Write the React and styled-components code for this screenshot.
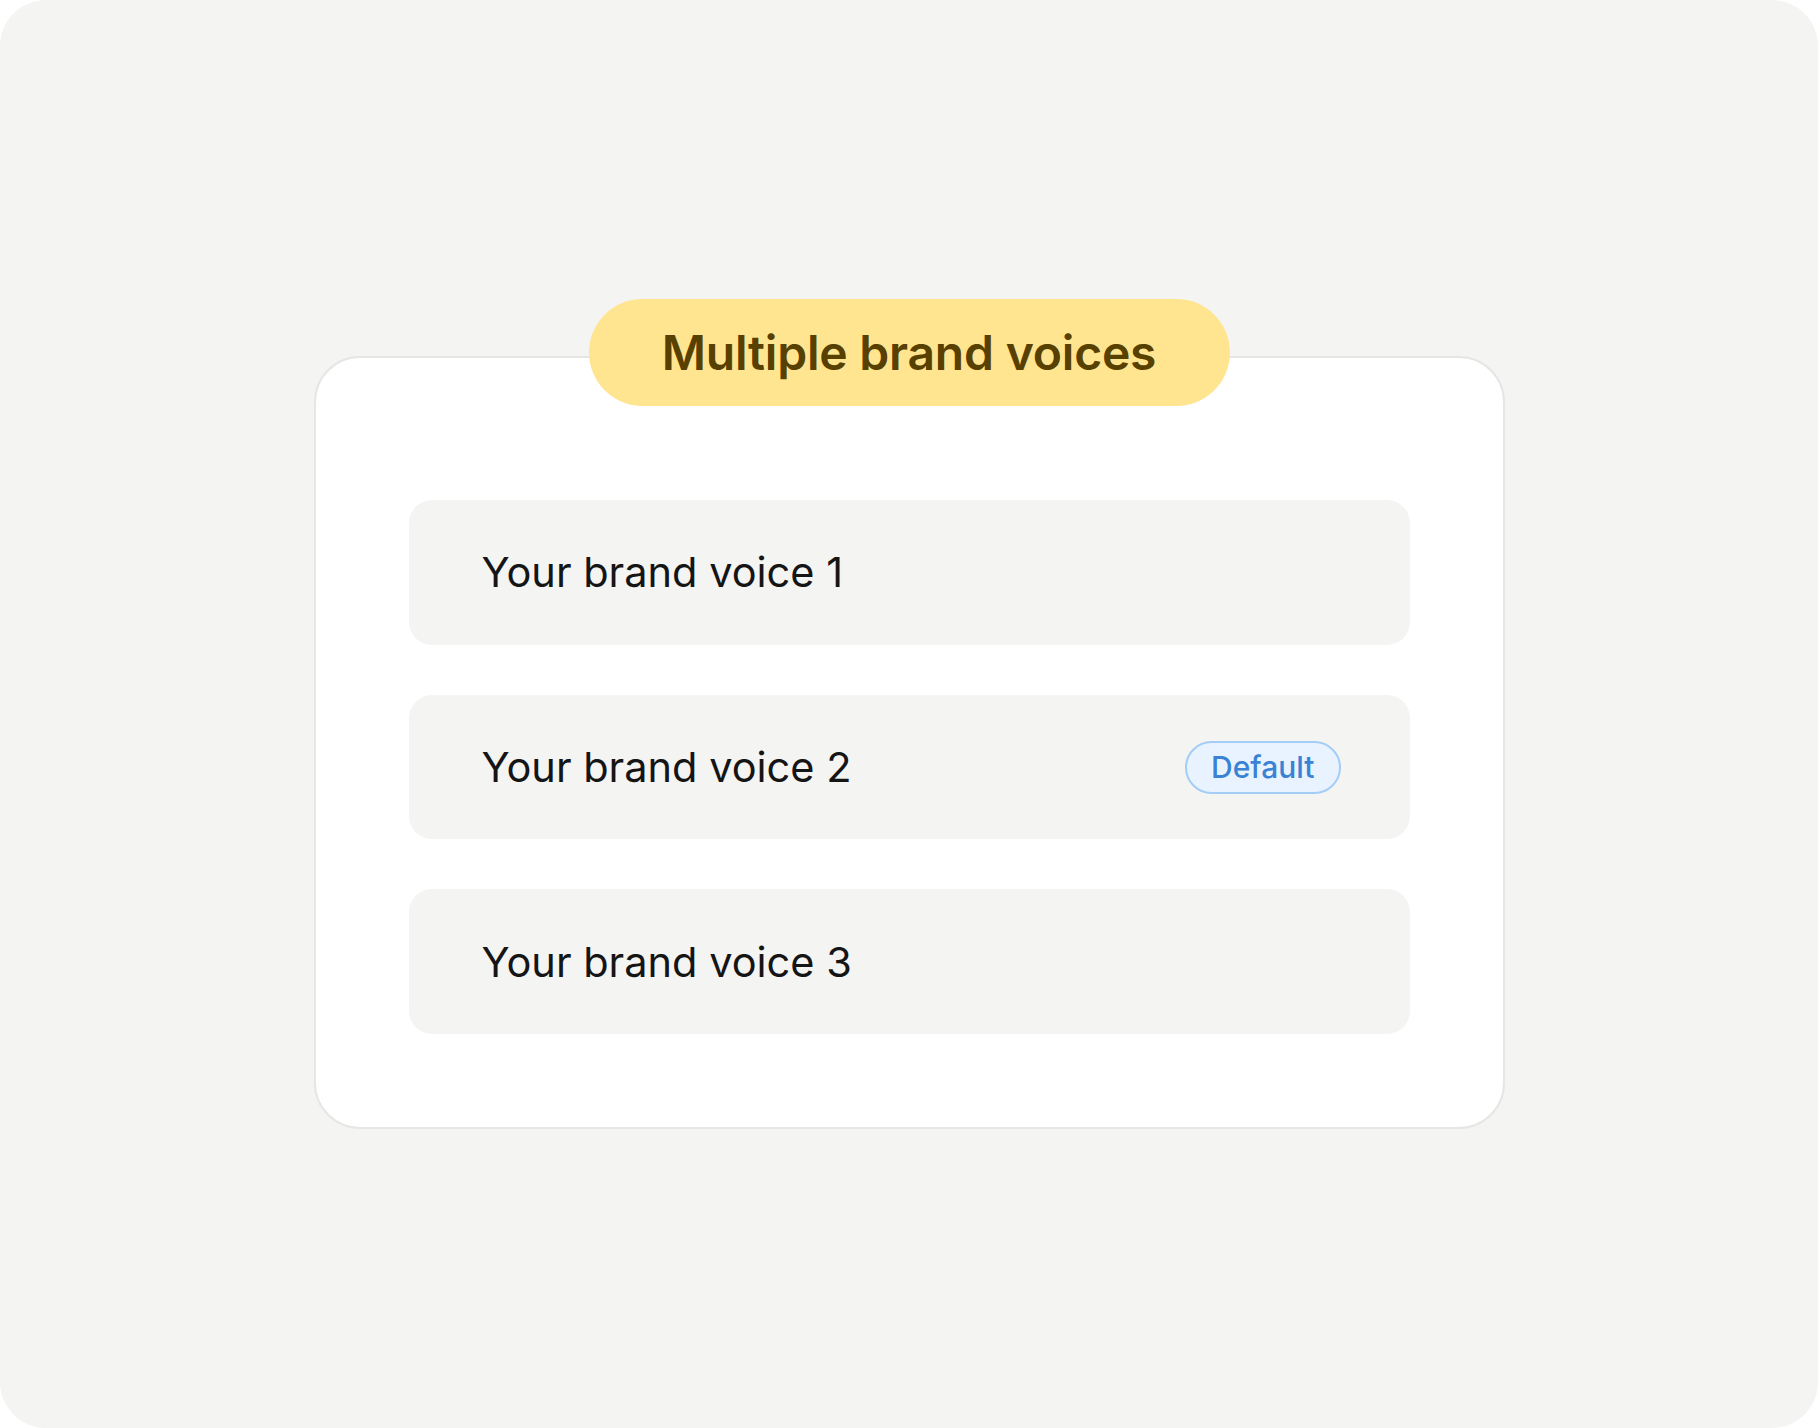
import React from 'react';
import styled, { createGlobalStyle } from 'styled-components';

const GlobalStyle = createGlobalStyle`
  html, body {
    margin: 0;
    padding: 0;
    background: #ffffff;
  }
  body {
    font-family: Inter, "Noto Sans", sans-serif;
  }
`

const Page = styled.div`
  width: 1818px;
  height: 1428px;
  background: #f4f4f2;
  border-radius: 46px;
  display: flex;
  align-items: center;
  justify-content: center;
`

const Stack = styled.div`
  display: flex;
  flex-direction: column;
  align-items: center;
`

const TitlePill = styled.div`
  position: relative;
  z-index: 1;
  width: 641px;
  height: 107px;
  box-sizing: border-box;
  border-radius: 54px;
  background: #ffe590;
  color: #574000;
  font-size: 48px;
  font-weight: 600;
  letter-spacing: -0.2px;
  display: flex;
  align-items: center;
  justify-content: center;
`

const Card = styled.div`
  margin-top: -50px;
  width: 1191px;
  height: 773px;
  box-sizing: border-box;
  background: #ffffff;
  border: 2px solid #e6e6e4;
  border-radius: 46px;
  padding: 142px 93px 93px;
  display: flex;
  flex-direction: column;
  gap: 50px;
`

const Row = styled.div`
  height: 145px;
  border-radius: 23px;
  background: #f4f4f2;
  display: flex;
  align-items: center;
  justify-content: space-between;
  padding: 0 69px 0 73px;
  box-sizing: border-box;
`

const Label = styled.span`
  font-size: 41.5px;
  font-weight: 400;
  color: #151515;
`

const Tag = styled.span`
  height: 53px;
  padding: 0 24px;
  box-sizing: border-box;
  border: 2px solid #a3cdf6;
  border-radius: 27px;
  background: #e9f3ff;
  color: #3a82d4;
  font-size: 30px;
  font-weight: 500;
  display: flex;
  align-items: center;
`

const voices = [
  { name: 'Your brand voice 1' },
  { name: 'Your brand voice 2', isDefault: true },
  { name: 'Your brand voice 3' },
];

const App = () => {
  return (
    <>
      <GlobalStyle />
      <Page>
        <Stack>
          <TitlePill>Multiple brand voices</TitlePill>
          <Card>
            {voices.map((v) => (
              <Row key={v.name}>
                <Label>{v.name}</Label>
                {v.isDefault && <Tag>Default</Tag>}
              </Row>
            ))}
          </Card>
        </Stack>
      </Page>
    </>
  )
}

export default App;
